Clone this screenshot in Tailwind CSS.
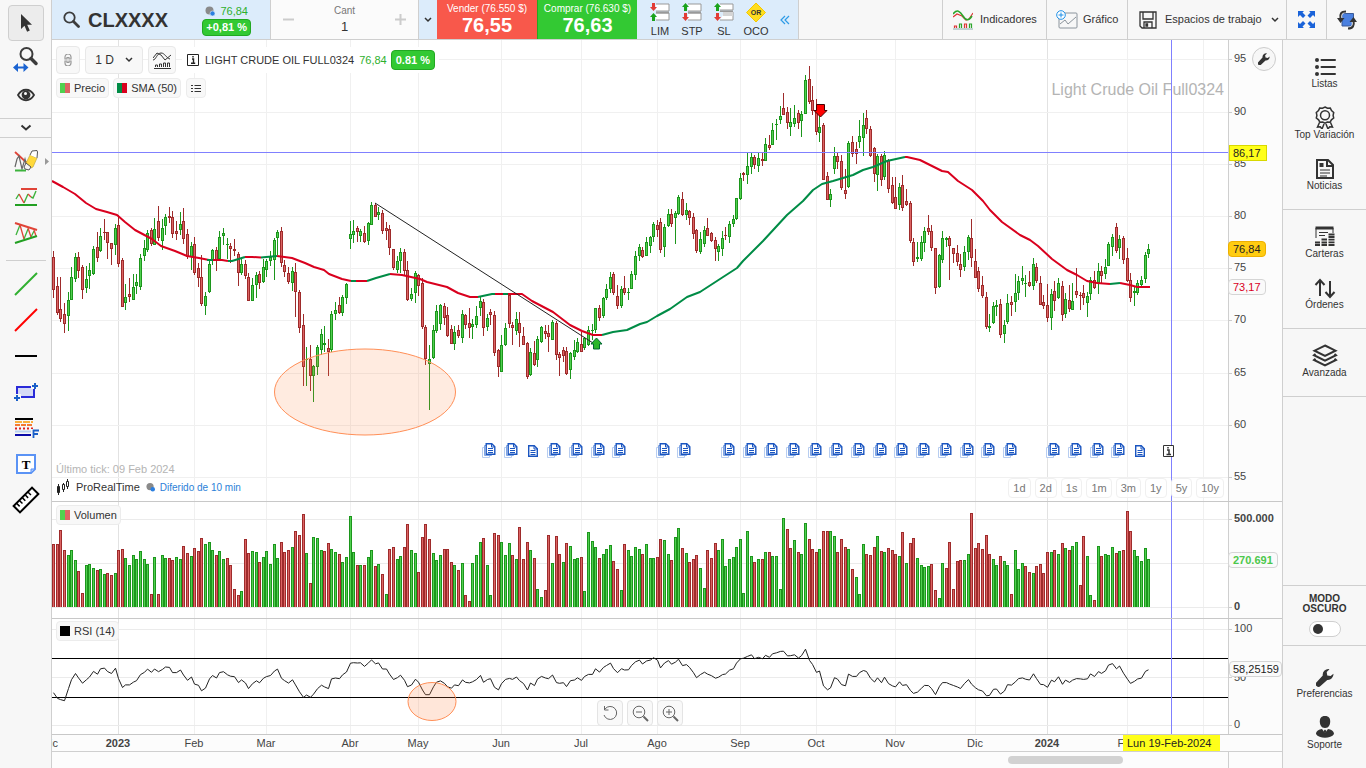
<!DOCTYPE html>
<html lang="es">
<head>
<meta charset="utf-8">
<meta name="viewport" content="width=device-width, initial-scale=1">
<title>CLXXXX - Light Crude Oil Full0324</title>
<script src="https://cdn.jsdelivr.net/npm/@tailwindcss/browser@4"></script>
</head>
<body class="flex h-screen overflow-hidden bg-white font-['Liberation_Sans',Arial,sans-serif] text-[11px] text-[#333]">

<!-- Drawing tools -->
<aside class="flex w-[52px] shrink-0 flex-col items-center border-r border-[#cfcfcf] bg-[#f7f7f7] pt-[5px]">
  <button aria-label="Seleccionar" class="flex h-9 w-9 items-center justify-center rounded-sm border border-[#cfcfcf] bg-[#ececec]">
    <svg width="14" height="20" viewBox="0 0 14 20"><path d="M2 1v15l3.500-3.200 2.600 6 2.700-1.200-2.600-5.800H13z" fill="#333"/></svg>
  </button>
  <button aria-label="Zoom" class="flex h-9 w-9 items-center justify-center">
    <svg width="26" height="26" viewBox="0 0 26 26" fill="none"><circle cx="13.500" cy="8" r="6" stroke="#3c3c3c" stroke-width="2"/><path d="m18 12.500 5 5" stroke="#3c3c3c" stroke-width="3.500" stroke-linecap="round"/><path d="M2 21.500h12" stroke="#1a63d1" stroke-width="2"/><path d="M5 17 0 21.500 5 26zM10.500 17l5 4.500-5 4.500z" fill="#1a63d1"/></svg>
  </button>
  <button aria-label="Mostrar" class="flex h-9 w-9 items-center justify-center">
    <svg width="18" height="14" viewBox="0 0 18 14"><path d="M1 7c4-7 12-7 16 0-4 7-12 7-16 0z" fill="none" stroke="#333" stroke-width="1.800"/><circle cx="9" cy="6.800" r="4.400" fill="#333"/><circle cx="8.500" cy="5.500" r="1.500" fill="#fff"/></svg>
  </button>
  <button aria-label="Más" class="mt-[5px] flex h-5 w-full items-center justify-center border-y border-[#cfcfcf]">
    <svg width="12" height="8" viewBox="0 0 12 8" fill="none" stroke="#333" stroke-width="2"><path d="m1.500 1.500 4.500 4 4.500-4"/></svg>
  </button>
  <div class="flex w-full flex-col items-center pt-[5px]">
    <button aria-label="Dibujar y borrar" class="relative flex h-9 w-full items-center justify-center">
      <svg width="24" height="24" viewBox="0 0 24 24" fill="none"><path d="m1 3 12 11" stroke="#e04438" stroke-width="1.800"/><path d="M1 18 3 10l2-3 3 13 3-10 2 8" stroke="#666" stroke-width="1.200"/><path d="M1 21.500h11" stroke="#3db33d" stroke-width="2"/><path d="m12 14 4-8 7 3-4 9-2 1z" fill="#ffd93b" stroke="#b8a030" stroke-width=".6"/><path d="m16 6 2-4 5-.5.5 1.500L23 9" fill="#fff" stroke="#555"/><path d="m12 14 5 4-2 3-4-1-1-2z" fill="#f4f4f4" stroke="#555"/></svg>
      <svg class="absolute right-[2px] top-[15px]" width="4" height="7" viewBox="0 0 4 7"><path d="m0 0 4 3.500L0 7z" fill="#999"/></svg>
    </button>
    <button aria-label="Soporte y resistencia" class="flex h-9 w-full items-center justify-center">
      <svg width="24" height="22" viewBox="0 0 24 22" fill="none"><path d="M7 3h16" stroke="#e04438" stroke-width="2"/><path d="m2 13 3-5M10 17l4-9M17 11l2 1 3-7" stroke="#3db33d" stroke-width="1.400"/><path d="m5 8 5 9M14 8l3 3" stroke="#e04438" stroke-width="1.400"/><path d="M1 19h22" stroke="#22a022" stroke-width="2"/></svg>
    </button>
    <button aria-label="Canal" class="flex h-9 w-full items-center justify-center">
      <svg width="24" height="24" viewBox="0 0 24 24" fill="none"><path d="m2 14 4-10M10 18l4-10M17 16l3-6" stroke="#3db33d" stroke-width="1.300"/><path d="m6 4 4 14M14 7l3 9M20 9l2 6" stroke="#e04438" stroke-width="1.300"/><path d="m1 2 22 7" stroke="#e04438" stroke-width="2"/><path d="m1 22 22-7" stroke="#22a022" stroke-width="2"/></svg>
    </button>
    <div class="mt-[9px] mb-[5px] h-px w-10 bg-[#cfcfcf]"></div>
    <button aria-label="Línea verde" class="flex h-9 w-full items-center justify-center"><svg width="24" height="24" viewBox="0 0 24 24"><path d="M1 23 23 1" stroke="#30b030" stroke-width="2"/></svg></button>
    <button aria-label="Línea roja" class="flex h-9 w-full items-center justify-center"><svg width="24" height="24" viewBox="0 0 24 24"><path d="M1 23 23 1" stroke="#f00" stroke-width="2"/></svg></button>
    <button aria-label="Línea horizontal" class="flex h-9 w-full items-center justify-center"><svg width="22" height="2"><path d="M0 1h22" stroke="#000" stroke-width="2"/></svg></button>
    <button aria-label="Rectángulo" class="flex h-9 w-full items-center justify-center">
      <svg width="26" height="20" viewBox="0 0 26 20"><path d="M4 5h17v10H4z" fill="#d6daf5" stroke="#2a2ad8" stroke-width="2"/><path d="M18 0h7v7h-7zM0 12h8v8H0z" fill="#f7f7f7"/><path d="M22 1v6M19 4h6M4 13v6M1 16h6" stroke="#1a5fc8" stroke-width="2"/></svg>
    </button>
    <button aria-label="Fibonacci" class="flex h-9 w-full items-center justify-center">
      <svg width="26" height="20" viewBox="0 0 26 20" fill="none"><path d="M2 1h18" stroke="#000" stroke-width="2"/><path d="M2 4h18" stroke="#fbb13c" stroke-width="2" stroke-dasharray="7 1"/><path d="M2 7h18" stroke="#f47b30" stroke-width="2" stroke-dasharray="5 1"/><path d="M2 10.500h18" stroke="#d22" stroke-width="2" stroke-dasharray="2 2"/><path d="M2 13.500h18" stroke="#b9d2f0" stroke-width="2"/><path d="M2 17h18" stroke="#0a0aa8" stroke-width="2"/><path d="M18 11h8v9h-8z" fill="#f7f7f7"/><path d="M20.500 20v-7.500H26M20.500 16H25" stroke="#1a5fc8" stroke-width="1.800"/></svg>
    </button>
    <button aria-label="Texto" class="flex h-9 w-full items-center justify-center">
      <svg width="20" height="20" viewBox="0 0 20 20"><path d="M1 1h18v14l-4 4H1z" fill="#fff" stroke="#5b93f5" stroke-width="2"/><path d="M19 15h-4v4z" fill="#a8c6ff" stroke="#5b93f5"/><text x="10" y="15" text-anchor="middle" font-family="Liberation Serif" font-weight="bold" font-size="13" fill="#000">T</text></svg>
    </button>
    <button aria-label="Regla" class="flex h-9 w-full items-center justify-center">
      <svg width="28" height="28" viewBox="0 0 28 28" fill="none"><g transform="rotate(-45 14 14)"><rect x="1" y="9.500" width="26" height="9" fill="#fff" stroke="#000" stroke-width="2"/><path d="M5 10v4M9 10v4M13 10v4M17 10v4M21 10v4" stroke="#000" stroke-width="1.500"/></g></svg>
    </button>
  </div>
</aside>

<div class="flex min-w-0 flex-1 flex-col">

<!-- Header -->
<header class="flex h-10 shrink-0 border-b border-[#cfcfcf] bg-[#f7f7f7]">
  <div class="flex w-[219px] shrink-0 items-center justify-between border-r border-[#cfcfcf] bg-[#dcecfb] pr-[19px] pl-[11px]">
    <button class="flex items-center gap-2 text-[20px] font-bold">
      <svg width="17" height="17" viewBox="0 0 17 17" fill="none" stroke="#3c3c3c"><circle cx="6.500" cy="6.500" r="5.200" stroke-width="1.800"/><path d="m10.500 10.500 5 5" stroke-width="2.800" stroke-linecap="round"/></svg>
      CLXXXX
    </button>
    <div class="flex flex-col items-center">
      <div class="flex h-4 items-center gap-[5px] text-[#2eb02e]">
        <svg width="10" height="10" viewBox="0 0 10 10"><circle cx="4.500" cy="4.500" r="4" fill="#8a8a8a"/><circle cx="7.500" cy="7.500" r="2.500" fill="#2b7fe0" stroke="#dcecfb" stroke-width=".6"/></svg>
        76,84
      </div>
      <div class="flex h-[17px] items-center rounded border border-[#22a822] bg-[#33c933] px-[3px] font-bold text-white">+0,81 %</div>
    </div>
  </div>
  <div class="flex w-[148px] shrink-0 items-center justify-between border-r border-[#cfcfcf] bg-[#fbfbfb] px-[12px]">
    <button aria-label="Menos"><svg width="11" height="11"><path d="M0 5.500h11" stroke="#ccc" stroke-width="2"/></svg></button>
    <div class="flex flex-col items-center pt-px">
      <label for="qty" class="text-[10px] leading-[14px] text-[#777]">Cant</label>
      <input id="qty" value="1" class="h-[18px] w-16 bg-transparent text-center text-[13px] outline-none">
    </div>
    <button aria-label="Más"><svg width="11" height="11"><path d="M0 5.500h11M5.500 0v11" stroke="#ccc" stroke-width="2"/></svg></button>
  </div>
  <button aria-label="Desplegar" class="flex w-[18px] shrink-0 items-center justify-center bg-[#dcecfb]"><svg width="8" height="6" viewBox="0 0 8 6" fill="none" stroke="#333" stroke-width="1.500"><path d="m1 1 3 3 3-3"/></svg></button>
  <button class="flex w-[100px] shrink-0 flex-col items-center bg-[#f8584b] pt-[3px] text-white"><span class="text-[10px] leading-[12px]">Vender (76.550 $)</span><span class="text-[20px] leading-[20px] font-bold">76,55</span></button>
  <button class="flex w-[100px] shrink-0 flex-col items-center border-l border-[#22a822] bg-[#33c933] pt-[3px] text-white"><span class="text-[10px] leading-[12px]">Comprar (76.630 $)</span><span class="text-[20px] leading-[20px] font-bold">76,63</span></button>
  <div class="flex w-[162px] shrink-0 items-center border-r border-[#cfcfcf] bg-[#dcecfb] pt-px pl-[7px] leading-[13px]">
    <button class="flex w-8 flex-col items-center gap-[3px]"><svg width="20" height="19" viewBox="0 0 20 19"><path d="M6 1h13v7H6M6 10h13v7H6" fill="#fff" stroke="#999"/><path d="M6 8.500h13v2H6z" fill="#999"/><path d="M2 0h3v4h2L3.500 8 0 4h2z" fill="#e23b34"/><path d="M2 18h3v-4h2L3.500 10 0 14h2z" fill="#1ba31b"/></svg>LIM</button>
    <button class="flex w-8 flex-col items-center gap-[3px]"><svg width="20" height="19" viewBox="0 0 20 19"><path d="M6 1h13v7H6M6 10h13v7H6" fill="#fff" stroke="#999"/><path d="M6 8.500h13v2H6z" fill="#999"/><path d="M2 8h3V4h2L3.500 0 0 4h2z" fill="#1ba31b"/><path d="M2 10h3v4h2l-3.500 4L0 14h2z" fill="#e23b34"/></svg>STP</button>
    <button class="flex w-8 flex-col items-center gap-[3px]"><svg width="20" height="19" viewBox="0 0 20 19"><path d="M6 1h13v6H6M9 9h10v3H9M9 12h10v5H6" fill="#fff" stroke="#999"/><path d="M9 9h10v4H9z" fill="#d5d5d5"/><path d="M6 7.500h13v1.500H6z" fill="#999"/><path d="M2 8h3V4h2L3.500 0 0 4h2z" fill="#1ba31b"/><path d="M2 10h3v4h2l-3.500 4L0 14h2z" fill="#e23b34"/></svg>SL</button>
    <button class="flex w-8 flex-col items-center gap-[3px]"><svg width="20" height="19" viewBox="0 0 20 19"><path d="m10 0 9.500 9.500L10 19 .5 9.500z" fill="#ffdd1f" stroke="#f5c800"/><text x="10" y="12" text-anchor="middle" font-size="7" font-weight="bold" fill="#333">OR</text></svg>OCO</button>
    <button aria-label="Plegar" class="ml-[8px]"><svg width="10" height="10" viewBox="0 0 10 10" fill="none" stroke="#2e9be6" stroke-width="1.200"><path d="M5 1 1 5l4 4M9 1 5 5l4 4"/></svg></button>
  </div>
  <div class="flex-1"></div>
  <button class="flex w-[104px] shrink-0 items-center gap-[7px] border-l border-[#cfcfcf] pl-[10px]"><svg width="20" height="20" viewBox="0 0 20 20" fill="none"><path d="m0 7 4-3 5 2 4 4 3-1 4-6" stroke="#d33" stroke-width="1.200"/><path d="M0 4c4-5 7-3 10 2s6 5 9 0" stroke="#2aa52a" stroke-width="1.500"/><path d="M1.500 18v-2h2v2M11.500 18v-4h2v4" stroke="#d33" stroke-width="1.200"/><path d="M6.500 18v-4h2v4M16.500 18v-4h2v4" stroke="#2aa52a" stroke-width="1.200"/><path d="M0 19h20" stroke="#8aa"/></svg>Indicadores</button>
  <button class="flex w-[81px] shrink-0 items-center gap-[5px] border-l border-[#cfcfcf] pl-[9px]"><svg width="22" height="19" viewBox="0 0 22 19" fill="none"><rect x="3" y="3" width="18" height="15" rx="1" stroke="#8b949c"/><path d="m4 14 5-4 3 4 8-7" stroke="#8b949c"/><circle cx="5" cy="5" r="4.300" fill="#fff" stroke="#1e90e8"/><path d="M5 2.500v5M2.500 5h5" stroke="#1e90e8"/></svg>Gráfico</button>
  <button class="flex w-[159px] shrink-0 items-center border-l border-[#cfcfcf] pl-[11px]"><svg width="18" height="18" viewBox="0 0 18 18" fill="none" stroke="#333" stroke-width="1.300"><path d="M1 1h16v16H3l-2-2z"/><path d="M4 1v7h10V1M5 17v-6h8v6"/><path d="M7 13h1.500v2H7z" fill="#333"/></svg><span class="ml-[8px]">Espacios de trabajo</span><svg class="ml-[9px]" width="8" height="6" viewBox="0 0 8 6" fill="none" stroke="#333" stroke-width="1.500"><path d="m1 1 3 3 3-3"/></svg></button>
  <button aria-label="Pantalla completa" class="flex w-10 shrink-0 items-center justify-center border-l border-[#cfcfcf]"><svg width="17" height="17" viewBox="0 0 17 17" fill="#1a63d9"><path d="M0 0h6L4.500 1.500 7.500 4.500l-2.500 2.500L2 4 0 6zM17 0v6l-2-2-3 3-2.500-2.500 3-3L11 0zM0 17v-6l2 2 3-3 2.500 2.500-3 3L6 17zM17 17h-6l1.500-1.500-3-3L12 10l3 3 2-2z"/></svg></button>
  <button aria-label="Girar" class="flex w-10 shrink-0 items-center justify-center border-l border-[#cfcfcf]"><svg width="20" height="20" viewBox="0 0 20 20" fill="none"><path d="M5 3.500h11.500v12.500H5z" fill="#4a80e0" stroke="#3a5a98"/><path d="M9 1C4 1 2.500 4 3.500 9M11 19c5 0 6.500-3 5.500-8" stroke="#f7f7f7" stroke-width="4"/><path d="M9 1.500C4 1.500 2.500 4 3.500 9M11 18.500c5 0 6.500-3 5.500-8" stroke="#333" stroke-width="2"/><path d="m0 8 3.500 5L7.500 8zM20 12l-3.500-5-4 5z" fill="#333"/></svg></button>
</header>

<div class="flex min-h-0 flex-1">

<!-- Chart panels -->
<main class="flex min-w-0 flex-1 flex-col">

  <section class="flex min-h-0 flex-1 border-b border-[#c8c8c8]">
    <div class="relative min-w-0 flex-1">
      <svg class="absolute inset-0 h-full w-full" viewBox="52 40 1176 461" preserveAspectRatio="none">
        <g class="gridX" data-y1="40" data-y2="501"></g>
        <path d="M52 59.500h1176M52 112.500h1176M52 164.500h1176M52 216.500h1176M52 268.500h1176M52 320.500h1176M52 373.500h1176M52 425.500h1176M52 477.500h1176" stroke="#f0f0f0" shape-rendering="crispEdges"/>
        <text x="1224" y="95" text-anchor="end" font-size="16" fill="#b4b4b4">Light Crude Oil Full0324</text>
        <g id="candles" shape-rendering="crispEdges"></g>
        <g fill="none" stroke-width="2" stroke-linejoin="round">
          <path stroke="#d9001e" d="M52 181l11 6 12 7 11 9 10 6 11 3 10 3 8 7 10 8 17 9 9 7 14 5 12 5 12 2 10 2M213 260h9l6 1M245 257h7l9 .5M277 256l15 2 13 5 9 4 10 3 5 4 13 5 9 2M356 281h11M390 274l12 1 18 4 7 3 20 5 11 6 12 4h8M495 294h8M508 294h14l10 7 21 11 17 13 12 6 11 4h9M905 157h2l13 3 22 11 6 1 10 9 14 9 11 11 7 9 12 12 18 13 10 5 8 6 14 13 15 11 10 5 10 6 10 2 13 1M1120 283l10 2 7 2h13"/>
          <path stroke="#008c46" d="M207 260h6M228 261h4l13-4M261 257.500l16-1.500M351 281h5M367 281l9-3 14-4M478 297l14-3h3M503 294h5M602 335l11-3 14-2 13-6 7-2 10-6 13-7 17-12 13-5 20-13 17-11 6-7 20-20 24-26 16-14 10-11 9-6 11-3 20-6 10-5 10-3 14-6 18-4M1110 284l10-1"/>
        </g>
        <path d="m375 203 218 140" stroke="#222"/>
        <ellipse cx="365" cy="392" rx="90.500" ry="43" fill="#ff8040" fill-opacity=".16" stroke="#ff8f57"/>
        <path d="M596.500 338 602 344h-2.500v5h-6v-5H591z" fill="#2ab52a" stroke="#063"/>
        <path d="M816.500 104.500h8v6h2.500l-6.500 6.500-6.500-6.500h2.500z" fill="#f00" stroke="#400"/>
        <path d="M52 152.500h1176M1171.500 40v461" stroke="#8080ff" shape-rendering="crispEdges"/>
        <defs>
          <g id="doc"><path d="M.7.7h5.600l3 3v7.600H.7z" fill="#fff" stroke="#1a55c0" stroke-width="1.400"/><path d="M6 .7v3.300h3.300M2.500 5.500h5M2.500 7.500h5M2.500 9.500h5" fill="none" stroke="#1a55c0"/></g>
          <g id="docs"><path d="M.5 4.500h7v10h-7z" fill="#fff" stroke="#b7cdf0"/><path d="M2.500 2.500h7v10h-7z" fill="#fff" stroke="#7fa5e4"/><use href="#doc" x="3.500"/></g>
        </defs>
        <g id="news"></g>
        <g><path d="M1163.500 445.500h10v11h-10z" fill="#fff" stroke="#333"/><path d="M1167 450h2v4M1166.500 454.500h4.500M1168 447v1.500" fill="none" stroke="#333" stroke-width="1.500"/></g>
      </svg>

      <div class="pointer-events-none absolute inset-0 flex flex-col justify-between">
        <div class="flex flex-col items-start gap-1 pt-[6px] pl-[4px]">
          <div class="pointer-events-auto flex h-7 items-center">
            <button aria-label="Vincular" class="mr-[5px] flex h-7 w-6 items-center justify-center rounded-sm border border-[#e8e8e8] bg-[#f8f8f8]"><svg width="8" height="12" viewBox="0 0 8 12" fill="none" stroke="#999" stroke-width="1.200"><path d="M1 5V3a2 2 0 0 1 6 0v2H5V3.500H3V5zM1 7v2a2 2 0 0 0 6 0V7H5v1.500H3V7z"/></svg></button>
            <button class="mr-[5px] flex h-7 w-[58px] items-center justify-center gap-[11px] rounded-sm border border-[#e8e8e8] bg-[#f8f8f8] text-[12px]">1 D<svg width="8" height="6" viewBox="0 0 8 6" fill="none" stroke="#333" stroke-width="1.500"><path d="m1 1 3 3 3-3"/></svg></button>
            <button aria-label="Indicadores del gráfico" class="flex h-7 w-[28px] items-center justify-center rounded-sm border border-[#e8e8e8] bg-[#f8f8f8]"><svg width="18" height="18" viewBox="0 0 18 18" fill="none" stroke="#333"><path d="m0 7 4-5 4 2 4 5 6-5"/><path d="M0 9c3 0 4-7 8-7s5 5 9 6"/><path d="M2.500 16v-2h2v2M6.500 16v-3h2v3M10.500 16v-4h2v4M14.500 16v-4h2v4M1 17.500h17"/></svg></button>
            <div class="ml-[6px] flex h-[26px] items-center bg-white pr-1 pl-[5px]">
              <svg width="12" height="12" viewBox="0 0 12 12" fill="none" stroke="#222"><path d="M.5.500h11v11H.5z"/><path d="M5 5h1.500v4M4 9.300h4.200M6 2v1.500" stroke-width="1.400"/></svg>
              <span class="ml-[6px] whitespace-nowrap">LIGHT CRUDE OIL FULL0324</span>
              <span class="ml-[5px] text-[#2eb02e]">76,84</span>
              <span class="ml-[4px] flex h-5 items-center rounded border border-[#22a822] bg-[#33c933] px-[4px] font-bold text-white">0.81 %</span>
            </div>
          </div>
          <div class="pointer-events-auto flex h-5 gap-1">
            <button class="flex items-center gap-1 rounded-sm border border-[#ececec] bg-[#f8f8f8] px-[3px]"><span class="h-[10px] w-[10px] bg-linear-to-r from-[#4fd14f] from-50% to-[#dc6464] to-50%"></span>Precio</button>
            <button class="flex items-center gap-1 rounded-sm border border-[#ececec] bg-[#f8f8f8] px-[3px]"><span class="h-[10px] w-[10px] bg-linear-to-r from-[#008c46] from-50% to-[#d9001e] to-50%"></span>SMA (50)</button>
            <button aria-label="Lista" class="ml-px flex w-5 items-center justify-center rounded-sm border border-[#ececec] bg-[#f8f8f8]"><svg width="10" height="9" viewBox="0 0 10 9" stroke="#333"><path d="M0 1.500h2M3.500 1.500H10M0 4.500h2M3.500 4.500H10M0 7.500h2M3.500 7.500H10"/></svg></button>
          </div>
        </div>
        <div class="flex items-end justify-between pb-[3px] pl-[4px]">
          <div class="flex flex-col">
            <span class="leading-[14px] text-[#b4b4b4]">Último tick: 09 Feb 2024</span>
            <div class="flex h-[22px] items-center">
              <svg width="15" height="16" viewBox="0 0 15 16" fill="#fff" stroke="#222"><path d="M2.500 5v11M7.500 4v9M11.500 0v10"/><path d="M1.500 7.500h2v6h-2z" fill="#222"/><path d="M6.500 5.500h2v5h-2zM10.500 2.500h2v5h-2z"/></svg>
              <span class="ml-[5px]">ProRealTime</span>
              <svg class="ml-[6px]" width="9" height="10" viewBox="0 0 10 10"><circle cx="4.500" cy="4.500" r="4" fill="#8a8a8a"/><circle cx="7.500" cy="7.500" r="2.500" fill="#2b7fe0"/></svg>
              <a href="#" class="pointer-events-auto ml-[5px] text-[10px] text-[#2b7fd8]">Diferido de 10 min</a>
            </div>
          </div>
          <div class="pointer-events-auto flex h-5 gap-1 pr-1 text-[#777]">
            <button class="rounded-sm border border-[#f0f0f0] bg-white/70 px-[4px]">1d</button>
            <button class="rounded-sm border border-[#f0f0f0] bg-white/70 px-[4px]">2d</button>
            <button class="rounded-sm border border-[#f0f0f0] bg-white/70 px-[4px]">1s</button>
            <button class="rounded-sm border border-[#f0f0f0] bg-white/70 px-[4px]">1m</button>
            <button class="rounded-sm border border-[#f0f0f0] bg-white/70 px-[4px]">3m</button>
            <button class="rounded-sm border border-[#f0f0f0] bg-white/70 px-[4px]">1y</button>
            <button class="rounded-sm border border-[#f0f0f0] bg-white/70 px-[4px]">5y</button>
            <button class="rounded-sm border border-[#f0f0f0] bg-white/70 px-[4px]">10y</button>
          </div>
        </div>
      </div>
    </div>
    <div class="relative w-[54px] shrink-0 border-l border-[#cfcfcf] bg-[#fcfcfc]">
      <svg class="absolute inset-0 h-full w-full" viewBox="1229 40 53 461" preserveAspectRatio="none" font-size="11" fill="#444">
        <path d="M1229 59.500h3M1229 112.500h3M1229 164.500h3M1229 216.500h3M1229 268.500h3M1229 320.500h3M1229 373.500h3M1229 425.500h3M1229 477.500h3" stroke="#ccc"/>
        <text x="1234" y="62">95</text><text x="1234" y="115">90</text><text x="1234" y="167">85</text><text x="1234" y="219">80</text><text x="1234" y="271">75</text><text x="1234" y="323">70</text><text x="1234" y="376">65</text><text x="1234" y="428">60</text><text x="1234" y="480">55</text>
      </svg>
      <div class="absolute top-[105px] left-0 flex h-4 w-[38px] items-center border border-[#d8d800] bg-[#ffff1a] pl-[3px] text-[#222]">86,17</div>
      <div class="absolute top-[201px] -left-px flex h-4 w-[38px] items-center rounded border border-[#eeb000] bg-[#ffcc11] pl-[4px] text-[#222]">76,84</div>
      <div class="absolute top-[239px] -left-px flex h-4 w-[38px] items-center rounded border border-[#d5d5d5] bg-[#fafafa] pl-[4px] text-[#d9001e]">73,17</div>
      <button aria-label="Ajustes" class="absolute top-[7px] right-[6px] flex h-6 w-6 items-center justify-center rounded-full border border-[#ccc] bg-[#f7f7f7]"><svg width="12" height="12" viewBox="0 0 16 16"><path d="M15.500 4.500 13 6.500 10 6 9.500 3 12 .5A5 5 0 0 0 6 6L.5 12A2 2 0 0 0 4 15.500L10 10a5 5 0 0 0 5.500-5.500z" fill="#333"/></svg></button>
    </div>
  </section>

  <section class="flex h-[117px] shrink-0 border-b border-[#c8c8c8]">
    <div class="relative min-w-0 flex-1">
      <svg class="absolute inset-0 h-full w-full" viewBox="52 502 1176 116" preserveAspectRatio="none">
        <g class="gridX" data-y1="502" data-y2="618"></g>
        <path d="M52 519.500h1176M52 563.500h1176M52 607.500h1176" stroke="#ebebeb" shape-rendering="crispEdges"/>
        <g id="volume" shape-rendering="crispEdges"></g>
        <path d="M1171.500 502v116" stroke="#8080ff" shape-rendering="crispEdges"/>
      </svg>
      <button class="absolute top-[3px] left-[4px] flex h-5 items-center gap-1 rounded-sm border border-[#ececec] bg-[#f8f8f8] px-[3px]"><span class="h-[10px] w-[10px] bg-linear-to-r from-[#4fd14f] from-50% to-[#dc6464] to-50%"></span>Volumen</button>
    </div>
    <div class="relative w-[54px] shrink-0 border-l border-[#cfcfcf] bg-[#fcfcfc]">
      <svg class="absolute inset-0 h-full w-full" viewBox="1229 502 53 116" preserveAspectRatio="none" font-size="11" font-weight="bold" fill="#444"><path d="M1229 519.500h3M1229 563.500h3M1229 607.500h3" stroke="#ccc"/><text x="1234" y="522">500.000</text><text x="1234" y="610">0</text></svg>
      <div class="absolute top-[50px] -left-px flex h-4 w-[50px] items-center rounded border border-[#d5d5d5] bg-[#fafafa] pl-[4px] font-bold text-[#4cc84c]">270.691</div>
    </div>
  </section>

  <section class="flex h-[116px] shrink-0 border-b border-[#c8c8c8]">
    <div class="relative min-w-0 flex-1">
      <svg class="absolute inset-0 h-full w-full" viewBox="52 619 1176 115" preserveAspectRatio="none">
        <g class="gridX" data-y1="619" data-y2="734"></g>
        <path d="M52 629.500h1176M52 677.500h1176M52 725.500h1176" stroke="#ebebeb" shape-rendering="crispEdges"/>
        <path d="M52 658.500h1176M52 697.500h1176" stroke="#000" shape-rendering="crispEdges"/>
        <polyline id="rsi" fill="none" stroke="#222"/>
        <ellipse cx="432" cy="701.500" rx="24" ry="19" fill="#ff8040" fill-opacity=".2" stroke="#ff8f57"/>
        <path d="M1171.500 619v115" stroke="#8080ff" shape-rendering="crispEdges"/>
      </svg>
      <button class="absolute top-[2px] left-[4px] flex h-5 items-center gap-1 rounded-sm border border-[#ececec] bg-[#f8f8f8] px-[3px]"><span class="h-[10px] w-[10px] bg-black"></span>RSI (14)</button>
      <div class="absolute inset-x-0 bottom-[8px] flex justify-center gap-1">
        <button aria-label="Restablecer" class="flex h-[26px] w-[26px] items-center justify-center rounded-sm border border-[#e4e4e4] bg-[#f9f9f9]"><svg width="16" height="16" viewBox="0 0 16 16" fill="none" stroke="#666"><path d="M3 4a6.500 6.500 0 1 1-1 6M2.500 1v4h4"/></svg></button>
        <button aria-label="Alejar" class="flex h-[26px] w-[26px] items-center justify-center rounded-sm border border-[#e4e4e4] bg-[#f9f9f9]"><svg width="17" height="17" viewBox="0 0 17 17" fill="none" stroke="#666"><circle cx="7" cy="7" r="5.800"/><path d="M4 7h6"/><path d="m11.500 11.500 4.500 4.500" stroke-width="2"/></svg></button>
        <button aria-label="Acercar" class="flex h-[26px] w-[26px] items-center justify-center rounded-sm border border-[#e4e4e4] bg-[#f9f9f9]"><svg width="17" height="17" viewBox="0 0 17 17" fill="none" stroke="#666"><circle cx="7" cy="7" r="5.800"/><path d="M4 7h6M7 4v6"/><path d="m11.500 11.500 4.500 4.500" stroke-width="2"/></svg></button>
      </div>
    </div>
    <div class="relative w-[54px] shrink-0 border-l border-[#cfcfcf] bg-[#fcfcfc]">
      <svg class="absolute inset-0 h-full w-full" viewBox="1229 619 53 115" preserveAspectRatio="none" font-size="11" fill="#444"><path d="M1229 629.500h3M1229 677.500h3M1229 725.500h3" stroke="#ccc"/><text x="1234" y="632">100</text><text x="1234" y="681">50</text><text x="1234" y="728">0</text></svg>
      <div class="absolute top-[42px] left-0 flex h-4 w-[53px] items-center rounded border border-[#d5d5d5] bg-[#fafafa] pl-[3px] text-[#222]">58,25159</div>
    </div>
  </section>

  <div class="flex h-[17px] shrink-0 border-b border-[#cfcfcf] bg-[#fcfcfc]">
    <div class="relative min-w-0 flex-1">
      <svg class="absolute inset-0 h-full w-full" viewBox="52 735 1176 16" preserveAspectRatio="none" font-size="11" fill="#444" text-anchor="middle">
        <text x="50" y="747">Dic</text><text x="118" y="747" font-weight="bold">2023</text><text x="194" y="747">Feb</text><text x="266" y="747">Mar</text><text x="350" y="747">Abr</text><text x="418" y="747">May</text><text x="501" y="747">Jun</text><text x="581" y="747">Jul</text><text x="657" y="747">Ago</text><text x="740" y="747">Sep</text><text x="816" y="747">Oct</text><text x="895" y="747">Nov</text><text x="975" y="747">Dic</text><text x="1047" y="747" font-weight="bold">2024</text><text x="1127" y="747">Feb</text>
      </svg>
      <div class="absolute top-0 right-[8px] flex h-4 w-[97px] items-center bg-[#ffff1a] pl-[4px] text-[#222]">Lun 19-Feb-2024</div>
    </div>
    <div class="w-[54px] shrink-0"></div>
  </div>
  <div class="flex h-4 shrink-0 bg-[#fcfcfc]">
    <div class="flex flex-1 items-center justify-end pr-[105px]"><div class="h-2 w-[115px] rounded-full bg-[#d2d2d2]"></div></div>
    <div class="w-[54px] shrink-0 border-l border-[#cfcfcf]"></div>
  </div>
</main>

<!-- Side navigation -->
<nav class="flex w-[84px] shrink-0 flex-col border-l border-[#cfcfcf] bg-[#f7f7f7] text-[10px] leading-[12px]">
  <div class="flex flex-col border-b border-[#cfcfcf] py-2">
    <button class="flex h-[51px] flex-col items-center pt-[7px]"><svg width="24" height="23" viewBox="0 0 24 23"><g fill="#333"><circle cx="4" cy="5" r="2"/><circle cx="4" cy="12" r="2"/><circle cx="4" cy="19" r="2"/></g><path d="M8.500 5H22M8.500 12H22M8.500 19H22" stroke="#333" stroke-width="2" stroke-linecap="round"/></svg>Listas</button>
    <button class="flex h-[51px] flex-col items-center pt-[7px]"><svg width="24" height="23" viewBox="0 0 24 23" fill="none" stroke="#333" stroke-width="1.500"><path d="m12 1 2.500 1.200 2.800-.1 1.200 2.500L20.700 6.500l-.6 3 .6 2.500-2.300 1.800-1.300 2.400-2.700-.1L12 17.200l-2.400-1.100-2.700.1-1.300-2.400L3.300 12l.6-2.500-.6-3 2.200-1.900 1.200-2.500 2.800.1z"/><circle cx="12" cy="9.200" r="4.500"/><path d="M6.500 16.500 4.500 21l2.800-.3L9 23l2-5M17.500 16.500l2 4.500-2.800-.3L15 23l-2-5"/></svg>Top Variación</button>
    <button class="flex h-[51px] flex-col items-center pt-[7px]"><svg width="20" height="23" viewBox="0 0 20 23" fill="none" stroke="#333" stroke-width="2"><path d="M2 3h11l5 5v13H2z"/><path d="M12 3v6h6"/><path d="M4.500 6h4v4h-4z" fill="#333" stroke="none"/><path d="M5 13h10M5 16h10M5 19h7" stroke-width="1.200"/></svg>Noticias</button>
  </div>
  <div class="flex flex-col border-b border-[#cfcfcf] py-2">
    <button class="flex h-[51px] flex-col items-center pt-[7px]"><svg width="22" height="23" viewBox="0 0 22 23" fill="none" stroke="#333"><path d="M2 13V3h17v5"/><path d="M1.500 3h18" stroke-width="3"/><path d="M5 7.500h9M5 10.500h6"/><path d="M1 17.500h5M1 20h5" stroke-width="1.800"/><path d="M7.500 14.500h5.500M7.500 17.500h5.500M7.500 20h5.500" stroke-width="1.800"/><path d="M14.500 9.500h6M14.500 12h6M14.500 14.700h6M14.500 17.400h6M14.500 20h6" stroke-width="1.800"/></svg>Carteras</button>
    <button class="flex h-[51px] flex-col items-center pt-[7px]"><svg width="24" height="23" viewBox="0 0 24 23" fill="none" stroke="#333" stroke-width="2"><path d="M7 20V5M2.500 9 7 4l4.500 5M17 5v15M12.500 16l4.500 5 4.500-5"/></svg>Órdenes</button>
  </div>
  <div class="flex flex-col border-b border-[#cfcfcf] py-2">
    <button class="flex h-[51px] flex-col items-center pt-[7px]"><svg width="26" height="23" viewBox="0 0 26 23" fill="none" stroke="#333" stroke-width="2"><path d="m13 1.500 10.500 5.200L13 12 2.500 6.700z"/><path d="M3.500 10 2 11.200l11 5.500 11-5.500-1.500-1.200M3.500 14.700 2 16l11 5.500L24 16l-1.500-1.300"/></svg>Avanzada</button>
  </div>
  <div class="flex-1"></div>
  <div class="flex flex-col items-center border-y border-[#cfcfcf] pt-2 pb-2">
    <label for="dark" class="text-center leading-[10px] font-bold">MODO<br>OSCURO</label>
    <input id="dark" type="checkbox" role="switch" class="mt-[7px] h-4 w-8 appearance-none rounded-full border border-[#cfcfcf] bg-white before:mt-[2px] before:ml-[3px] before:block before:h-[10px] before:w-[10px] before:rounded-full before:bg-[#333] before:content-['']">
  </div>
  <div class="flex flex-col pt-3 pb-2">
    <button class="flex h-[51px] flex-col items-center pt-[7px]"><svg width="18" height="23" viewBox="0 -3 16 20"><path d="M15.500 4.500 13 6.500 10 6 9.500 3 12 .5A5 5 0 0 0 6 6L.5 12A2 2 0 0 0 4 15.500L10 10a5 5 0 0 0 5.500-5.500z" fill="#333"/></svg>Preferencias</button>
    <button class="flex h-[51px] flex-col items-center pt-[7px]"><svg width="20" height="23" viewBox="0 0 20 23"><path d="M10 0c4.200 0 5.200 2.600 5.200 5.500S14 12 10 12 4.800 8.400 4.800 5.500 5.800 0 10 0z" fill="#333"/><path d="M1 18c0-3 3-4.500 6-5l3 4 3-4c3 .5 6 2 6 5-3 5-15 5-18 0z" fill="#333"/><path d="m10 13.500 1.200 1.200-.7 3.300h-1l-.7-3.300z" fill="#333"/></svg>Soporte</button>
  </div>
</nav>
</div>
</div>

<script>
// Session rows: colour, high, body top, body bottom, low, in thirds of a pixel below the block's base line.
const blocks = [
[160, `r273 291 389 413,r351 378 459 465,r351 447 476 486,r429 462 491 518,g396 420 467 513,g321 351 419 419,g279 291 356 365,r276 291 332 353,r315 321 389 417,g318 357 384 399,g309 330 347 387,g258 267 342 345,r216 261 293 306,g204 228 273 276,r177 216 218 240,r216 216 249 297,r249 249 267 315,g192 204 255 285,r165 195 312 321,r294 300 441 441,g372 411 429 450,r354 402 410 426,g342 381 419 420,g342 366 378 402,g282 294 380 390,g240 264 288 303,g210 219 270 276,r204 210 252 258,g174 207 255 255,r138 183 234 243,g177 204 243 270,g162 171 197 225,r141 168 173 189,r153 171 221 234,r183 213 222 240,g156 192 210 225,r144 183 237 252,r207 222 291 297,g246 258 290 330,r231 252 339 345,r309 324 353 381,r285 351 431 437,g396 408 438 465,g300 312 395 399,g267 270 300 315,r261 270 299 333,g213 231 297 303,g204 219 228 255,g234 252 254 297,r249 258 267 308,r237 267 273 288,r276 282 339 378,g297 312 339 345,r300 312 348 357,r339 351 423 423,g354 375 422 423,g336 345 374 413,r333 342 369 387,g297 321 366 369,g297 303 330 351,g273 291 303 318,g234 240 300 360,g210 216 234 285,r201 213 308 321,r300 315 336 351,r321 339 366 372,g321 333 369 393,r309 336 396 471,r390 396 504 518,r462 495 621 678,g561 597 600 678,r555 597 648 693,g615 618 648 726,g555 561 620 645,g507 522 570 585,g498 549 554 576,r537 564 575 648,g453 462 570 576,g426 450 462 480,r411 435 459 462,g405 411 458 468,g369 372 413 432`],
[180, `g123 162 176 207,g120 153 164 189,r138 144 155 186,g147 153 168 186,r138 159 186 189,g126 129 182 195,g66 75 134 135,r69 75 110 111,g81 96 104 120,r90 99 152 162,r126 144 153 180,r135 147 204 225,r207 207 263 270,g228 243 269 279,g204 216 242 279,r207 216 272 288,r243 270 360 363,g324 342 357 363,g273 279 338 369,r282 285 318 348,r294 309 440 447,r435 441 536 555,g495 537 551 690,g435 450 534 537,g375 393 452 459,g372 375 432 450,r369 378 413 435,r381 405 467 471,r435 447 491 491,g438 456 491 510,r435 450 467 474,g390 402 473 489,r402 405 434 447,r384 429 444 474,g417 432 440 477,g378 408 435 444,g351 363 383 408,r357 366 443 468,g402 414 440 453,r387 396 405 435,r393 405 518 528,r507 510 561 591,g465 495 575 576,g429 444 495 498,r342 345 431 444,r426 435 444 495,g396 417 452 465,r396 429 458 500,r441 468 494 495,r486 489 590 597,g504 516 584 588,r483 519 555 558,g468 477 540 561,g438 441 485 488,r435 453 462 477,r435 459 470 516,g420 426 479 480,r423 429 524 540,r516 522 533 588,r501 510 528 546,r501 513 582 585,g516 519 570 597,g480 510 530 540,g474 486 515 518,r456 492 515 516,g474 474 503 510,g438 450 494 497,g432 450 452 480,g384 384 449 460,r375 384 414 423,g351 354 407 413,g312 327 354 360,g276 291 326 338,r276 282 338 345,r315 348 378 387,g318 327 377 384,r288 324 339 345,g324 336 339 360,g273 282 326 326,g213 228 284 300,g192 201 228 243`],
[60, `r561 570 591 594,g531 546 587 588,g528 531 557 579,g486 492 530 546,r480 495 509 531,r474 486 570 579,g492 501 560 591,g447 462 497 500,r447 462 491 500,g453 459 473 552,g405 411 461 465,r396 417 465 468,g429 450 465 480,r450 453 474 495,r459 471 521 537,r507 510 573 579,g516 537 576 582,g498 510 551 561,r474 504 527 528,r516 519 543 546,r531 540 567 603,g552 558 575 603,g513 534 567 588,r501 525 527 540,g483 492 530 549,g465 477 491 500,g414 414 477 480,g339 354 416 420,r336 339 345 363,g276 318 345 372,g276 291 320 342,r285 291 314 326,g279 294 318 336,r276 297 302 318,g234 252 302 303,r225 255 264 270,g189 210 254 255,g177 192 195 239,g138 168 179 192,r99 144 165 165,r141 156 188 207,g144 186 200 228,g135 174 192 200,r150 159 189 207,g153 162 182 231,g45 60 161 162,r18 57 125 132,r78 120 152 165,r117 152 215 225,g165 201 218 246,r189 195 359 360,r336 348 419 420,g387 402 419 441,g261 288 326 342,r279 288 306 327,r285 303 383 390,r327 390 402 417,g243 249 381 384,r228 246 281 291,r246 267 282 312,g180 228 245 264,g159 195 233 288,r150 174 207 222,r198 207 288 291,r261 264 341 366,g282 288 344 393,r282 288 360 378,g273 285 350 360,r297 300 386 399,r351 375 429 432,r351 411 446 446,g369 381 434 450,r345 375 443 453,r387 423 434 437`],
[140, `r183 189 302 309,r294 306 365 378,g306 351 357 366,g288 306 356 363,g261 273 308 336,r225 264 276 285,r255 273 323 333,r324 324 443 462,g342 345 440 444,g273 294 359 369,g291 294 300 321,r288 294 318 420,r324 324 341 369,r315 339 365 378,r342 372 389 411,g318 336 380 393,g285 291 336 360,r237 294 354 381,r327 363 413 414,r381 393 446 456,r408 435 467 474,r456 471 560 567,g522 558 563 576,g486 498 548 552,g480 495 502 528,r477 492 584 594,g540 555 582 609,g462 489 545 552,r468 486 494 528,g402 459 485 516,g408 423 459 480,g378 414 422 435,g405 429 431 471,r393 426 437 440,g354 372 437 450,r369 381 423 429,r408 429 494 495,r465 486 497 507,r432 495 534 546,g447 462 533 570,r423 453 482 513,g414 429 474 477,r423 438 524 543,g459 477 521 534,r435 480 507 516,g429 483 509 510,r384 453 465 474,r456 465 468 510,r435 459 474 495,g456 468 488 531,g411 420 461 480,r393 420 443 447,g369 393 429 462,r378 393 407 432,g357 381 402 417,g306 312 377 378,g282 291 320 348,r249 261 332 339,g285 297 323 357,r288 294 359 372,r324 354 423 426,r399 420 473 486,g441 453 458 498,g420 429 458 465,g408 420 434 437,g336 345 416 429,g312 327 341 354`]
];
// Volume bars: sign gives the colour (negative is a falling session), value the bar's top in thirds of a pixel below y 430.
const volumes = [-342,-342,-300,-360,375,360,390,-423,-489,405,402,414,-420,417,432,-429,-435,429,-360,-357,384,405,375,387,363,387,402,-492,381,-492,375,384,-384,-390,381,387,-348,-369,378,-354,-363,-324,342,336,360,-375,363,387,-384,-405,-477,-495,483,-327,-369,363,366,-396,381,363,402,342,384,-336,-366,-360,351,-303,-315,-252,369,-459,321,324,360,-363,-339,357,366,-372,396,381,258,366,-405,405,-405,381,360,-408,402,-432,492,-357,-351,387,378,-351,-282,360,369,-426,-321,-282,-327,369,390,375,-357,-357,-396,405,-420,399,-495,-513,399,375,336,-324,405,495,-309,-315,336,375,339,-375,387,-291,-387,-336,360,-384,477,501,-480,-315,399,-318,-372,396,-339,348,387,384,-381,483,306,333,351,-384,372,357,345,-393,-417,480,-342,360,378,351,357,-372,342,384,384,-381,-327,330,372,-390,321,294,-354,369,-396,-387,-375,414,474,-360,-384,-339,360,327,408,387,381,351,327,489,303,378,-396,387,-387,366,-366,378,378,477,264,-297,-354,330,-366,372,279,-327,-357,-366,357,-303,-303,303,318,-366,-327,-351,357,-417,441,492,342,-372,-375,-351,318,-363,366,-354,-360,-372,378,-306,399,-339,-324,384,405,411,408,-402,-480,504,399,-414,-336,-477,-393,-390,390,372,-249,-354,-339,-357,-315,-372,387,405,-378,393,405,-492,360,417,399,-408,-426,429,-408,-402,-429,-366,366,-360,372,-339,354,-360,348,336,-465,-318,378,495,-510,348,-378,372,375,351,-369,363,-360,-243,-303,360,378,393,354,387];

const xAt = i => Math.floor(53.7 + 3.614 * i);
const dark = up => up ? '#1c961c' : '#9e2b2b';
const light = up => up ? '#50d050' : '#dc6464';
const rect = (x, y, w, h, f) => `<rect x="${x}" y="${y}" width="${w}" height="${h}" fill="${f}"/>`;

let out = '', i = 0;
const closes = [];
for (const [base, rows] of blocks) for (const row of rows.split(',')) {
  const up = row[0] === 'g';
  const [hi, top, bot, lo] = row.slice(1).split(' ').map(v => base + Math.round(v / 3));
  const x = xAt(i++), h = Math.max(1, bot - top);
  out += rect(x, hi, 1, Math.max(1, lo - hi), dark(up)) + rect(x - 1, top, 3, h, dark(up));
  if (h > 2) out += rect(x, top + 1, 1, h - 2, light(up));
  closes.push(up ? top : bot);
}
document.getElementById('candles').innerHTML = out;

document.getElementById('volume').innerHTML = volumes.map((v, n) => {
  const y = 430 + Math.round(Math.abs(v) / 3), up = v > 0, x = xAt(n);
  return rect(x - 1, y, 3, 607 - y, dark(up)) + rect(x, y + 1, 1, 606 - y, light(up));
}).join('');

// Wilder RSI over 14 sessions; 100 sits at y 629 and 0 at y 725.
let gain = 2.9, loss = 5.6;
document.getElementById('rsi').setAttribute('points', closes.map((c, n) => {
  if (n) {
    const d = closes[n - 1] - c;
    gain = (gain * 13 + Math.max(d, 0)) / 14;
    loss = (loss * 13 + Math.max(-d, 0)) / 14;
  }
  return `${xAt(n) + 0.5},${(725.5 - 96 * gain / (gain + loss)).toFixed(1)}`;
}).join(' '));

for (const g of document.querySelectorAll('.gridX')) {
  const { y1, y2 } = g.dataset;
  g.innerHTML = [118, 194, 266, 350, 418, 501, 581, 657, 740, 816, 895, 975, 1047, 1127, 1203].map(x =>
    rect(x, y1, 1, y2 - y1, x === 118 || x === 1047 ? '#e2e2e2' : '#f0f0f0')).join('');
}

const pairs = [482, 504, 547, 569, 591, 612, 656, 677, 721, 743, 764, 786, 808, 829, 851, 873, 894, 916, 938, 960, 981, 1003, 1046, 1068, 1090, 1111];
document.getElementById('news').innerHTML =
  pairs.map(x => `<use href="#docs" x="${x}" y="443"/>`).join('') +
  [528, 1135].map(x => `<use href="#doc" x="${x}" y="445"/>`).join('');
</script>
</body>
</html>
